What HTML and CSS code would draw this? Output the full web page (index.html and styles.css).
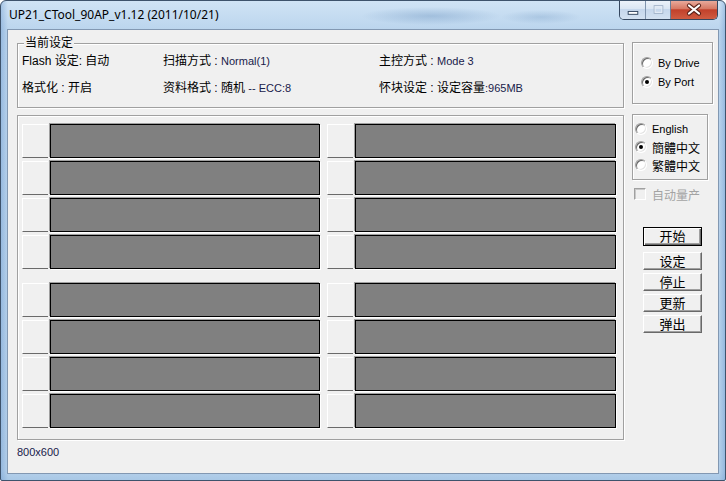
FILE: index.html
```html
<!DOCTYPE html>
<html>
<head>
    <meta charset="UTF-8">
    <title>UP21_CTool_90AP_v1.12</title>
    <link rel="stylesheet" href="styles.css">
</head>
<body>
<div class="window">
    <div class="titlebar">
        <span class="title">UP21_CTool_90AP_v1.12 (2011/10/21)</span>
        <div class="caption-btns">
            <div class="cbtn min">
                <svg width="26" height="18" viewBox="0 0 26 18"><rect x="8.5" y="10.5" width="10" height="3" fill="#fff" stroke="#33465f"/></svg>
            </div>
            <div class="cbtn max">
                <svg width="25" height="18" viewBox="0 0 25 18"><rect x="8.5" y="4.5" width="9" height="8" fill="none" stroke="#9fb0c6"/><rect x="9.5" y="5.5" width="7" height="6" fill="none" stroke="#e6edf6"/></svg>
            </div>
            <div class="cbtn close">
                <svg width="46" height="18" viewBox="0 0 46 18">
                    <path d="M18 4.5 L28 12.5 M28 4.5 L18 12.5" stroke="#5b231a" stroke-width="4.2" stroke-linecap="round"/>
                    <path d="M18 4.5 L28 12.5 M28 4.5 L18 12.5" stroke="#fff" stroke-width="2.2" stroke-linecap="round"/>
                </svg>
            </div>
        </div>
    </div>

    <div class="client">
        <div class="left-col">
            <!-- current settings -->
            <div class="group settings">
                <span class="group-label">当前设定</span>
                <div class="settings-grid">
                    <div>Flash 设定: 自动</div>
                    <div>扫描方式 : <span class="val">Normal(1)</span></div>
                    <div>主控方式 : <span class="val">Mode 3</span></div>
                    <div class="row2">格式化 : 开启</div>
                    <div>资料格式 : 随机 <span class="val">-- ECC:8</span></div>
                    <div>怀块设定 : 设定容量<span class="val">:965MB</span></div>
                </div>
            </div>

            <!-- port slots -->
            <div class="group ports">
                <div class="bank">
                    <div class="slot"><div class="sq"></div><div class="bar"></div></div>
                    <div class="slot"><div class="sq"></div><div class="bar"></div></div>
                    <div class="slot"><div class="sq"></div><div class="bar"></div></div>
                    <div class="slot"><div class="sq"></div><div class="bar"></div></div>
                    <div class="slot"><div class="sq"></div><div class="bar"></div></div>
                    <div class="slot"><div class="sq"></div><div class="bar"></div></div>
                    <div class="slot"><div class="sq"></div><div class="bar"></div></div>
                    <div class="slot"><div class="sq"></div><div class="bar"></div></div>
                </div>
                <div class="bank">
                    <div class="slot"><div class="sq"></div><div class="bar"></div></div>
                    <div class="slot"><div class="sq"></div><div class="bar"></div></div>
                    <div class="slot"><div class="sq"></div><div class="bar"></div></div>
                    <div class="slot"><div class="sq"></div><div class="bar"></div></div>
                    <div class="slot"><div class="sq"></div><div class="bar"></div></div>
                    <div class="slot"><div class="sq"></div><div class="bar"></div></div>
                    <div class="slot"><div class="sq"></div><div class="bar"></div></div>
                    <div class="slot"><div class="sq"></div><div class="bar"></div></div>
                </div>
            </div>

            <div class="status">800x600</div>
        </div>

        <div class="right-col">
            <div class="group drive-box">
                <div class="opt"><span class="radio"></span>By Drive</div>
                <div class="opt"><span class="radio checked"></span>By Port</div>
            </div>

            <div class="group lang-box">
                <div class="opt"><span class="radio"></span>English</div>
                <div class="opt cjk"><span class="radio checked"></span>簡體中文</div>
                <div class="opt cjk"><span class="radio"></span>繁體中文</div>
            </div>

            <div class="check-row"><span class="checkbox"></span>自动量产</div>

            <div class="buttons">
                <div class="btn default">开始</div>
                <div class="btn first">设定</div>
                <div class="btn">停止</div>
                <div class="btn">更新</div>
                <div class="btn">弹出</div>
            </div>
        </div>
    </div>
</div>
</body>
</html>
```

FILE: styles.css
```css
* {
    box-sizing: border-box;
}
body {
    margin: 0;
    background: #fff;
    font-family: "Liberation Sans", "Noto Sans CJK SC", sans-serif;
    font-size: 12px;
    color: #000;
}

/* window frame */
.window {
    width: 726px;
    height: 481px;
    display: flex;
    flex-direction: column;
    border: 1px solid #3e536c;
    border-radius: 6px 6px 2px 2px;
    overflow: hidden;
    background:
        radial-gradient(ellipse 70px 9px at 430px 15px, rgba(80, 125, 175, .30), transparent),
        radial-gradient(ellipse 40px 7px at 540px 16px, rgba(80, 125, 175, .22), transparent),
        linear-gradient(to right, rgba(90, 140, 200, .35), transparent 7px, transparent 718px, rgba(90, 140, 200, .35)),
        linear-gradient(#d0e3f5, #bad4ed 30px, #b5d0ea 470px, #a9c8e6);
}
.titlebar {
    height: 28px;
    display: flex;
    align-items: flex-start;
}
.title {
    margin: 6px 0 0 8px;
    font-family: "Noto Sans", "Liberation Sans", sans-serif;
    font-size: 12px;
    line-height: 16px;
    color: #000;
}
.caption-btns {
    display: flex;
    margin: -1px 7px 0 auto;
    height: 20px;
    border: 1px solid #35475f;
    border-top: none;
    border-radius: 0 0 5px 5px;
    overflow: hidden;
}
.cbtn {
    height: 19px;
    display: flex;
    align-items: center;
    justify-content: center;
}
.cbtn.min,
.cbtn.max {
    background: linear-gradient(#eef3fa, #dbe6f3 45%, #c6d7ec 50%, #d3e1f1);
}
.cbtn.min {
    width: 26px;
    border-right: 1px solid #7f93ad;
}
.cbtn.max {
    width: 25px;
    border-right: 1px solid #6b7f99;
}
.cbtn.close {
    width: 46px;
    background: linear-gradient(#ebb0a2, #d77a65 45%, #c2412b 52%, #cf5c42);
}

/* client area */
.client {
    flex: 1;
    margin: 0 6px 6px;
    background: #f0f0f0;
    border: 1px solid #8298b2;
    display: flex;
    padding: 13px 0 0 9px;
}
.left-col {
    width: 607px;
}
.group {
    position: relative;
    border: 1px solid #a0a0a0;
    box-shadow: inset 1px 1px 0 #fff, 1px 1px 0 #fff;
}
.group-label {
    position: absolute;
    top: -8px;
    left: 6px;
    padding: 0 1px;
    background: #f0f0f0;
    line-height: 14px;
}

.settings {
    height: 65px;
    padding: 2px 0 0 4px;
}
.settings-grid {
    display: grid;
    grid-template-columns: 141px 216px 1fr;
    grid-auto-rows: 27px;
    align-items: center;
    white-space: nowrap;
}
.val {
    font-size: 11px;
    color: #18204a;
}

.ports {
    height: 325px;
    margin-top: 7px;
    padding: 8px 0 0 4px;
}
.bank {
    display: grid;
    grid-template-columns: 298px 289px;
    grid-auto-flow: column;
    grid-template-rows: repeat(4, 34px);
    column-gap: 7px;
    row-gap: 3px;
}
.bank + .bank {
    margin-top: 14px;
}
.slot {
    display: flex;
}
.sq {
    width: 26px;
    background: #f0f0f0;
    border-top: 1px solid #fff;
    border-left: 1px solid #fff;
    border-bottom: 1px solid #6a6a6a;
}
.bar {
    flex: 1;
    margin-left: 2px;
    background: #808080;
    border: 1px solid #000;
    box-shadow: -1px -1px 0 #a0a0a0, 1px 1px 0 #fff;
}
.status {
    margin-top: 6px;
    font-size: 11px;
    line-height: 13px;
    color: #18204a;
}

/* right side controls */
.right-col {
    margin-left: 8px;
    width: 81px;
}
.drive-box {
    width: 81px;
    height: 62px;
    margin-top: -1px;
    padding: 10px 0 0 8px;
}
.lang-box {
    width: 76px;
    height: 66px;
    margin-top: 10px;
    padding: 5px 0 0 2px;
}
.opt {
    display: flex;
    align-items: center;
    gap: 5px;
    height: 19px;
    font-size: 11px;
    white-space: nowrap;
}
.lang-box .opt {
    height: 18px;
}
.opt.cjk {
    font-size: 12px;
}
.radio {
    width: 12px;
    height: 12px;
    flex: none;
    border-radius: 50%;
    background: #fff;
    border: 1px solid;
    border-color: #a0a0a0 #fff #fff #a0a0a0;
    box-shadow: inset 1px 1px 0 #696969, inset -1px -1px 0 #e3e3e3;
    display: flex;
    align-items: center;
    justify-content: center;
}
.radio.checked::after {
    content: "";
    width: 4px;
    height: 4px;
    border-radius: 50%;
    background: #000;
}

.check-row {
    display: flex;
    align-items: center;
    gap: 6px;
    height: 14px;
    margin-top: 7px;
    padding-left: 2px;
    color: #a3a3a3;
    white-space: nowrap;
}
.checkbox {
    width: 12px;
    height: 12px;
    flex: none;
    background: #f0f0f0;
    border: 1px solid;
    border-color: #a0a0a0 #fff #fff #a0a0a0;
    box-shadow: inset 1px 1px 0 #c8c8c8;
}

.buttons {
    margin: 26px 0 0 11px;
}
.btn {
    width: 59px;
    height: 18px;
    margin-top: 3px;
    background: #f0f0f0;
    border: 1px solid;
    border-color: #fff #696969 #696969 #fff;
    box-shadow: inset -1px -1px 0 #a0a0a0;
    font-family: "Noto Sans CJK SC", sans-serif;
    font-size: 13px;
    line-height: 15px;
    text-align: center;
}
.btn.default {
    height: 19px;
    margin-top: 0;
    border-color: #000;
    box-shadow: inset 1px 1px 0 #fff, inset -1px -1px 0 #696969, inset -2px -2px 0 #a0a0a0;
}
.btn.first {
    margin-top: 6px;
}
```
